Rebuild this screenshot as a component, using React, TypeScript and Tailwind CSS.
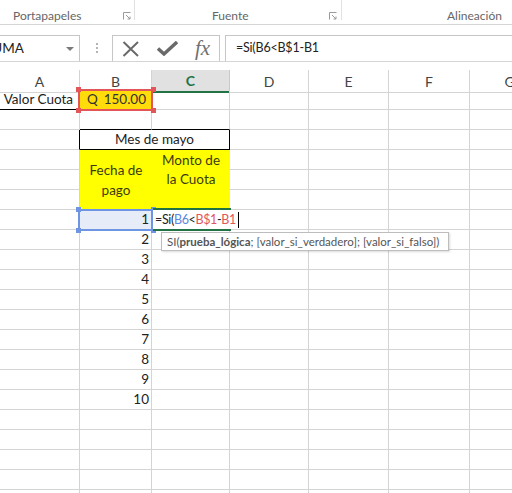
import React from "react";

const CELL_FONT = { fontFamily: "Lato, 'Liberation Sans', sans-serif" };
const UI_FONT = { fontFamily: "Lato, 'Noto Sans', sans-serif" };

const COLUMNS = ["A", "B", "C", "D", "E", "F", "G"];
const ROWS = Array.from({ length: 21 }, (_, i) => i + 1);

function Launcher() {
  return (
    <svg width="8" height="8" viewBox="0 0 8 8" className="shrink-0">
      <path d="M0.5 7.5V0.5H7.5" fill="none" stroke="#9a9a9a" strokeWidth="1" />
      <path d="M3 3L7 7M7 4.5V7H4.5" fill="none" stroke="#9a9a9a" strokeWidth="1" />
    </svg>
  );
}

function Handle({ className }: { className: string }) {
  return <div className={"absolute w-[5px] h-[5px] " + className} />;
}

function renderCell(r: number, c: number) {
  const key = `${r}-${c}`;
  const grid = "border-r border-b border-[#d4d4d4]";

  if ((r === 3 && c === 2) || ((r === 5 || r === 6) && (c === 1 || c === 2))) return null;

  if (r === 1 && c === 0)
    return (
      <div key={key} className="border-r border-b border-r-[#d4d4d4] border-b-black flex items-end justify-end pr-[6px] pb-[1px] leading-[18px] text-[13.5px] text-[#222] whitespace-nowrap">
        Valor Cuota
      </div>
    );
  if (r === 1 && c === 1)
    return (
      <div key={key} className="border-r border-b border-[#d4d4d4] bg-[#ffdc0a] flex items-end justify-between pl-[7px] pr-[5px] pb-[1px] leading-[18px] text-[13.5px] text-[#333] whitespace-nowrap">
        <span>Q</span>
        <span>150.00</span>
      </div>
    );
  if (r === 2 && (c === 1 || c === 2))
    return <div key={key} className="border-r border-b border-r-[#d4d4d4] border-b-black" />;
  if (r === 3 && c === 0)
    return <div key={key} className="border-r border-b border-r-black border-b-[#d4d4d4]" />;
  if (r === 3 && c === 1)
    return (
      <div key={key} className="col-span-2 border-r border-b border-black flex items-end justify-center pb-[1px] leading-[18px] text-[13.5px] text-[#222] whitespace-nowrap">
        Mes de mayo
      </div>
    );
  if (r === 4 && c === 1)
    return (
      <div key={key} className="row-span-3 bg-[#ffff00] flex items-center justify-center text-center leading-[20px] text-[13.5px] text-[#3b3b10]">
        <span>
          Fecha de
          <br />
          pago
        </span>
      </div>
    );
  if (r === 4 && c === 2)
    return (
      <div key={key} className="row-span-3 bg-[#ffff00] flex items-start justify-center text-center pt-[1px] leading-[19px] text-[13.5px] text-[#3b3b10]">
        <span>
          Monto de
          <br />
          la Cuota
        </span>
      </div>
    );
  if (c === 1 && r >= 7 && r <= 16)
    return (
      <div key={key} className={grid + (r === 7 ? " bg-[#e6edf9]" : "") + " flex items-end justify-end pr-[2px] pb-[1px] leading-[18px] text-[13.5px] text-[#222]"}>
        {r - 6}
      </div>
    );
  return <div key={key} className={grid} />;
}

export default function App() {
  return (
    <div className="w-[512px] h-[493px] overflow-hidden bg-white relative select-none">
      {/* ribbon group labels */}
      <div className="h-[25px] flex border-b border-[#d5d5d5] text-[12px] text-[#666]" style={UI_FONT}>
        <div className="w-[134px] flex items-center pt-[8px] pl-[13px] pr-[3px]">
          <span>Portapapeles</span>
          <span className="ml-auto">
            <Launcher />
          </span>
        </div>
        <div className="w-px h-[20px] bg-[#e1e1e1]" />
        <div className="w-[206px] flex items-center pt-[8px] pl-[77px] pr-[4px]">
          <span>Fuente</span>
          <span className="ml-auto">
            <Launcher />
          </span>
        </div>
        <div className="w-px h-[20px] bg-[#e1e1e1]" />
        <div className="flex-1 flex items-center pt-[8px] pl-[105px]">
          <span>Alineación</span>
        </div>
      </div>

      {/* formula bar */}
      <div className="h-[37px] flex items-end border-b border-[#d5d5d5]">
        <div className="w-[80px] h-[26px] border-t border-r border-[#c6c6c6] flex items-center overflow-hidden relative">
          <span className="-ml-[15px] text-[13.5px] text-[#222] whitespace-nowrap" style={CELL_FONT}>
            SUMA
          </span>
          <svg width="8" height="5" viewBox="0 0 8 5" className="absolute left-[66px] top-[11px]">
            <path d="M0 0H8L4 4Z" fill="#7a7a7a" />
          </svg>
        </div>
        <div className="w-[32px] h-[26px] flex flex-col items-center pt-[8px] gap-[2px] pl-[1px]">
          <div className="w-[2px] h-[2px] bg-[#b4b4b4]" />
          <div className="w-[2px] h-[2px] bg-[#b4b4b4]" />
          <div className="w-[2px] h-[2px] bg-[#b4b4b4]" />
        </div>
        <div className="w-[108px] h-[26px] border-t border-x border-[#c6c6c6] flex items-center">
          <svg width="18" height="16" viewBox="0 0 18 16" className="ml-[9px]">
            <path d="M1.5 1L16 15M16 1L1.5 15" stroke="#6a6a6a" strokeWidth="2" fill="none" />
          </svg>
          <svg width="21" height="15" viewBox="0 0 21 15" className="ml-[17px]">
            <path d="M1 7.5L7 13L20 1" stroke="#6a6a6a" strokeWidth="3.4" fill="none" />
          </svg>
          <span
            className="ml-[17px] text-[21px] italic text-[#707070] leading-none"
            style={{ fontFamily: "'Liberation Serif', serif" }}
          >
            fx
          </span>
        </div>
        <div className="ml-[5px] flex-1 h-[26px] border-t border-l border-[#c6c6c6] flex items-center pl-[10px] text-[12.5px] tracking-[-0.2px] text-[#222] whitespace-nowrap" style={CELL_FONT}>
          =Si(B6&lt;B$1-B1
        </div>
      </div>

      <div className="h-[8px]" />

      {/* column headers */}
      <div className="grid grid-cols-[80px_72px_78px_79px_80px_81px_80px] h-[20px] text-[14px] text-[#444]" style={UI_FONT}>
        {COLUMNS.map((col) =>
          col === "C" ? (
            <div key={col} className="bg-[#e1e1e1] border-r border-[#c9c9c9] border-b-2 border-b-[#217346] flex items-center justify-center font-bold text-[#217346]">
              {col}
            </div>
          ) : (
            <div key={col} className="border-r border-b border-[#d4d4d4] flex items-center justify-center">
              {col}
            </div>
          )
        )}
      </div>

      {/* cells */}
      <div className="relative" style={CELL_FONT}>
        <div className="grid grid-cols-[80px_72px_78px_79px_80px_81px_80px] auto-rows-[20px]">
          {ROWS.map((r) => COLUMNS.map((_, c) => renderCell(r, c)))}
        </div>

        {/* B1 reference (red) */}
        <div className="absolute left-[78px] top-[-1px] w-[75px] h-[22px] border-2 border-[#e2565a]" />
        <Handle className="left-[76px] top-[-3px] bg-[#e2565a]" />
        <Handle className="left-[151px] top-[-3px] bg-[#e2565a]" />
        <Handle className="left-[76px] top-[18px] bg-[#e2565a]" />
        <Handle className="left-[151px] top-[18px] bg-[#e2565a]" />

        {/* B6 reference (blue) */}
        <div className="absolute left-[78px] top-[119px] w-[75px] h-[22px] border-2 border-[#6d95e4]" />
        <Handle className="left-[76px] top-[117px] bg-[#6d95e4]" />
        <Handle className="left-[151px] top-[117px] bg-[#6d95e4]" />
        <Handle className="left-[76px] top-[138px] bg-[#6d95e4]" />
        <Handle className="left-[151px] top-[138px] bg-[#6d95e4]" />

        {/* active cell in edit mode */}
        <div className="absolute left-[153px] top-[120px] w-[92px] h-[19px] bg-white flex items-end pl-[2px] leading-[18px] text-[12.5px] tracking-[-0.35px] text-[#222] whitespace-nowrap">
          <span>=Si(</span>
          <span className="text-[#5b87e0]">B6</span>
          <span>&lt;</span>
          <span className="text-[#e2565a]">B$1</span>
          <span>-</span>
          <span className="text-[#e2565a]">B1</span>
          <span className="w-px h-[16px] bg-black ml-[2px] mb-[1px]" />
        </div>
        <div className="absolute left-[153px] top-[118px] w-[78px] h-[2px] bg-[#217346]" />
        <div className="absolute left-[153px] top-[139px] w-[78px] h-[2px] bg-[#217346]" />

        {/* function tooltip */}
        <div
          className="absolute left-[161px] top-[142px] w-[288px] h-[19px] bg-white border border-[#bdbdbd] shadow-[1px_1px_2px_rgba(0,0,0,0.15)] flex items-center pl-[5px] text-[11.5px] text-[#555] whitespace-nowrap"
          style={UI_FONT}
        >
          SI(<span className="font-bold">prueba_lógica</span>; [valor_si_verdadero]; [valor_si_falso])
        </div>
      </div>
    </div>
  );
}
